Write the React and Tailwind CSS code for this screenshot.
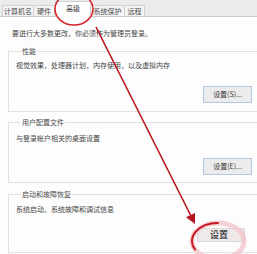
import React from "react";

const tabs = [
  { label: "计算机名", w: "w-[32px]" },
  { label: "硬件", w: "w-[22px]" },
  { label: "高级", w: "w-[36px]", active: true },
  { label: "系统保护", w: "w-[35px]" },
  { label: "远程", w: "w-[21px]" },
];

const Group = ({ title, text, button, className, textPad, btnGap, bottomPad, big }) => (
  <fieldset className={`border border-[#e0e0e0] w-[255px] pl-[7px] ${className}`}>
    <legend className="ml-[5px] px-[1px] leading-[10px] text-[#4a4a4a]">{title}</legend>
    <p className={`leading-[10px] ${textPad}`}>{text}</p>
    <div className={`flex justify-end ${btnGap} ${bottomPad} ${big ? "pr-[17px]" : "pr-[10px]"}`}>
      {big ? (
        <button className="w-[48px] h-[14px] bg-[#efe9ea] border border-[#dcd6d6] text-[9px] leading-[12px] font-medium text-[#2a2a2a] pr-[4px]">
          {button}
        </button>
      ) : (
        <button className="w-[49px] h-[17px] bg-[#ececec] border border-[#b4c7de] leading-[15px] text-[#3a3a3a]">
          {button}
        </button>
      )}
    </div>
  </fieldset>
);

export default function App() {
  return (
    <div className="relative w-[257px] h-[254px] overflow-hidden bg-[#fdfdfd] text-[7px] leading-[10px] text-[#444] font-['Noto_Sans_CJK_SC','Noto_Sans',sans-serif]">
      {/* tab strip */}
      <div className="h-[17px] bg-[#ebebeb] border-b border-[#cacaca] flex items-end pl-[2px]">
        {tabs.map((t) =>
          t.active ? (
            <div
              key={t.label}
              className={`${t.w} h-[16px] -mb-px bg-[#fdfdfd] border border-b-0 border-[#cfcfcf] flex items-center justify-center pb-[3px] text-[#3a3a3a]`}
            >
              {t.label}
            </div>
          ) : (
            <div
              key={t.label}
              className={`${t.w} h-[11px] bg-[#f4f4f4] border border-b-0 border-[#d2d2d2] -ml-px first:ml-0 flex items-center justify-center text-[#4a4a4a]`}
            >
              {t.label}
            </div>
          )
        )}
      </div>

      <div className="pl-[8px]">
        <p className="pl-[4px] mt-[11px]">要进行大多数更改，你必须作为管理员登录。</p>

        <Group
          title="性能"
          text="视觉效果，处理器计划，内存使用，以及虚拟内存"
          button="设置(S)..."
          className="mt-[8px]"
          textPad="pt-[4px]"
          btnGap="mt-[16px]"
          bottomPad="pb-[8px]"
        />
        <Group
          title="用户配置文件"
          text="与登录帐户相关的桌面设置"
          button="设置(E)..."
          className="mt-[5px]"
          textPad="pt-[6px]"
          btnGap="mt-[15px]"
          bottomPad="pb-[7px]"
        />
        <Group
          title="启动和故障恢复"
          text="系统启动、系统故障和调试信息"
          button="设置"
          className="mt-[6px]"
          textPad="pt-[5px]"
          btnGap="mt-[14px]"
          bottomPad="pb-[10px]"
          big
        />
      </div>

      {/* red annotations */}
      <svg className="absolute inset-0 pointer-events-none" width="257" height="254" viewBox="0 0 257 254">
        <ellipse cx="218" cy="241" rx="26" ry="18" fill="none" stroke="#f2c3c7" strokeWidth="5" opacity="0.75" />
        <path d="M195 249.4 A26 18 0 0 1 218 223" fill="none" stroke="#c8151f" strokeWidth="2" strokeLinecap="round" />
        <ellipse cx="74" cy="9" rx="19" ry="16" fill="none" stroke="#d9232a" strokeWidth="1.6" />
        <line x1="96" y1="27" x2="192" y2="218" stroke="#b5161c" strokeWidth="1.6" />
        <polygon points="195,224 186,217.3 195,212.9" fill="#b5161c" />
      </svg>
    </div>
  );
}
